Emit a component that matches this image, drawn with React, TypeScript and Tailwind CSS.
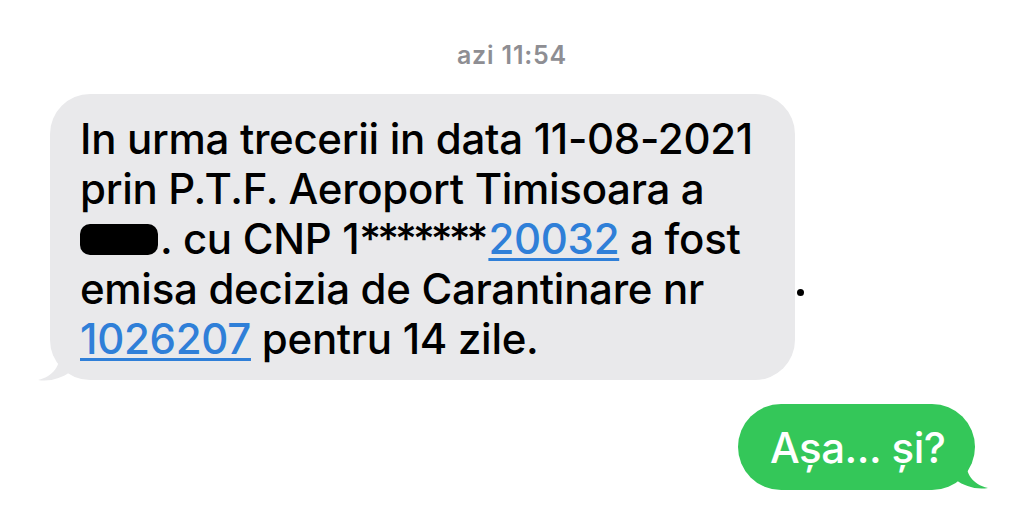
import React from "react";

export default function App() {
  return (
    <div
      className="w-[1024px] h-[521px] bg-white overflow-hidden flex flex-col"
      style={{ fontFamily: "Inter, 'Noto Sans', sans-serif" }}
    >
      <div className="pt-[38px] text-center text-[25px] leading-[34px] font-semibold text-[#8e8e93] tracking-[0.8px]">
        azi 11:54
      </div>
      <div className="flex flex-row mt-[22px]">
        <div className="relative ml-[50px] w-[745px] h-[286px] rounded-[40px] bg-[#e9e9eb] pl-[30px] pt-[20px] text-[42px] leading-[50px] font-medium text-black tracking-[-0.3px]">
          <div>In urma trecerii in data 11-08-2021</div>
          <div>prin P.T.F. Aeroport Timisoara a</div>
          <div className="flex items-center">
            <span className="inline-block w-[78px] h-[31px] rounded-[10px] bg-black mr-[2px]" />
            <span>. cu CNP 1</span>
            <span className="tracking-[-4px] mr-[4px]">*******</span>
            <span className="text-[#2f7fd8] underline decoration-[3px] underline-offset-[4px]">20032</span>
            <span className="whitespace-pre"> a fost</span>
          </div>
          <div>emisa decizia de Carantinare nr</div>
          <div>
            <span className="text-[#2f7fd8] underline decoration-[3px] underline-offset-[4px]">1026207</span> pentru 14 zile.
          </div>
          <svg className="absolute left-[-12px] bottom-[-2px]" width="40" height="30" viewBox="0 0 40 30">
            <path d="M22 0 C22 14 16 24 0 28 C12 30 24 26 32 20 L40 20 L40 0 Z" fill="#e9e9eb" />
          </svg>
        </div>
        <div className="w-[7px] h-[7px] rounded-full bg-black ml-[2px] mt-[195px]" />
      </div>
      <div className="flex justify-end mt-[24px] pr-[49px]">
        <div className="relative w-[237px] h-[86px] rounded-[43px] bg-[#34c759] flex items-center pl-[32px] text-[42px] font-medium text-white tracking-[-0.5px]">
          Așa... și?
          <svg className="absolute right-[-13px] bottom-0" width="40" height="30" viewBox="0 0 40 30">
            <path d="M18 0 C18 14 24 24 40 28 C28 30 16 26 8 20 L0 20 L0 0 Z" fill="#34c759" />
          </svg>
        </div>
      </div>
    </div>
  );
}
